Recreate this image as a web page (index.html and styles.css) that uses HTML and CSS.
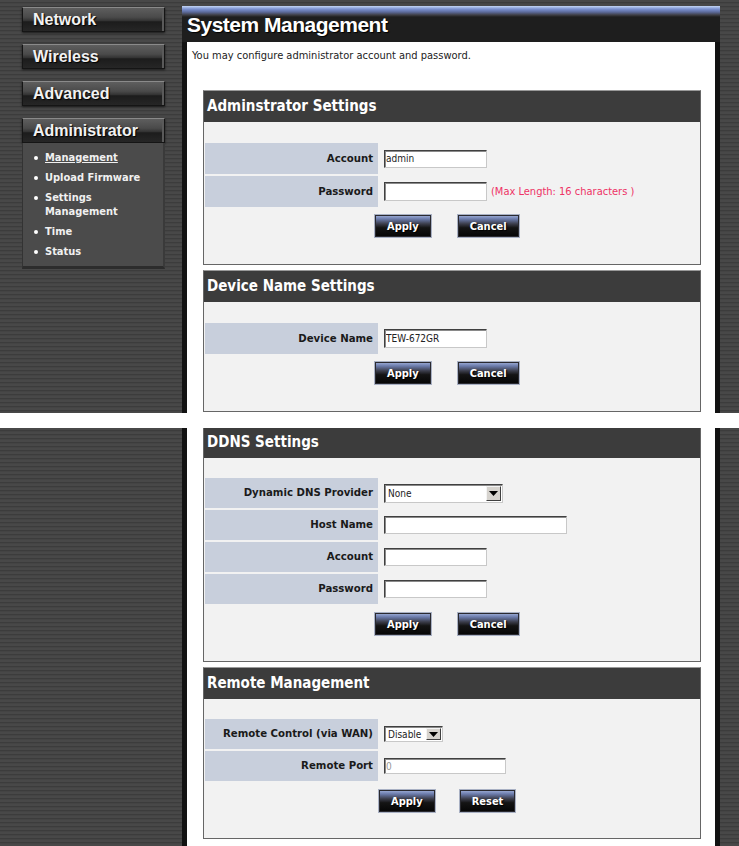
FILE: index.html
```html
<html lang="en">
<head>
  <meta charset="UTF-8">
  <meta name="viewport" content="width=device-width, initial-scale=1.0">
  <title>System Management</title>
  <link rel="stylesheet" href="styles.css">
</head>
<body>
  <!-- upper part of the page -->
  <div class="shot shot-top">
    <aside class="side">
      <nav class="menu">
        <a class="nav-btn">Network</a>
        <a class="nav-btn">Wireless</a>
        <a class="nav-btn">Advanced</a>
        <a class="nav-btn">Administrator</a>
        <ul class="sub">
          <li><a class="current">Management</a></li>
          <li><a>Upload Firmware</a></li>
          <li><a>Settings<br>Management</a></li>
          <li><a>Time</a></li>
          <li><a>Status</a></li>
        </ul>
      </nav>
    </aside>

    <div class="frame">
      <div class="title-bar"><h1>System Management</h1></div>
      <div class="content">
        <p class="intro">You may configure administrator account and password.</p>
        <div class="boxes">

          <section class="box">
            <h2 class="box-head">Adminstrator Settings</h2>
            <div class="box-body">
              <div class="rows">
                <div class="label">Account</div>
                <div class="value"><input class="txt" type="text" value="admin"></div>
                <div class="label">Password</div>
                <div class="value"><input class="txt tall" type="password"><span class="note">(Max Length: 16 characters )</span></div>
              </div>
              <div class="btn-row">
                <button class="btn">Apply</button>
                <button class="btn">Cancel</button>
              </div>
            </div>
          </section>

          <section class="box">
            <h2 class="box-head">Device Name Settings</h2>
            <div class="box-body">
              <div class="rows">
                <div class="label">Device Name</div>
                <div class="value"><input class="txt tall" type="text" value="TEW-672GR"></div>
              </div>
              <div class="btn-row">
                <button class="btn">Apply</button>
                <button class="btn">Cancel</button>
              </div>
            </div>
          </section>

        </div>
      </div>
    </div>
  </div>

  <!-- lower part of the page -->
  <div class="shot shot-bottom">
    <aside class="side"></aside>
    <div class="frame">
      <div class="content">
        <div class="boxes">

          <section class="box cut">
            <h2 class="box-head">DDNS Settings</h2>
            <div class="box-body">
              <div class="rows">
                <div class="label">Dynamic DNS Provider</div>
                <div class="value">
                  <div class="select wide"><span class="sel-text">None</span><span class="sel-arrow"><svg width="9" height="5" viewBox="0 0 9 5"><path d="M0 0h9L4.5 5z" fill="#000"/></svg></span></div>
                </div>
                <div class="label">Host Name</div>
                <div class="value"><input class="txt long" type="text"></div>
                <div class="label">Account</div>
                <div class="value"><input class="txt" type="text"></div>
                <div class="label">Password</div>
                <div class="value"><input class="txt" type="password"></div>
              </div>
              <div class="btn-row">
                <button class="btn">Apply</button>
                <button class="btn">Cancel</button>
              </div>
            </div>
          </section>

          <section class="box">
            <h2 class="box-head">Remote Management</h2>
            <div class="box-body">
              <div class="rows">
                <div class="label">Remote Control (via WAN)</div>
                <div class="value">
                  <div class="select small"><span class="sel-text">Disable</span><span class="sel-arrow"><svg width="9" height="5" viewBox="0 0 9 5"><path d="M0 0h9L4.5 5z" fill="#000"/></svg></span></div>
                </div>
                <div class="label">Remote Port</div>
                <div class="value"><input class="txt port" type="text" value="0"></div>
              </div>
              <div class="btn-row alt">
                <button class="btn">Apply</button>
                <button class="btn">Reset</button>
              </div>
            </div>
          </section>

        </div>
      </div>
    </div>
  </div>
</body>
</html>
```

FILE: styles.css
```css
/* General Styling */
body {
  margin: 0;
  background: #fff;
  font-family: "DejaVu Sans Condensed", "DejaVu Sans", sans-serif;
  font-size: 11px;
  color: #1a1a1a;
}

.shot {
  --row: 30px;
  --pad: 20px;
  --pad-end: 25px;
  --btn-gap: 8px;
  display: flex;
  overflow: hidden;
  background: repeating-linear-gradient(#484848 0 2px, #3c3c3c 2px 3px, #444 3px 4px);
}

.shot-top {
  --row: 31px;
  --pad: 21px;
  --pad-end: 26px;
  --btn-gap: 7px;
  height: 413px;
}

.shot-bottom {
  height: 418px;
  margin-top: 15px;
}

/* Sidebar */
.side {
  width: 182px;
  flex: none;
}

.menu {
  width: 143px;
  margin: 7px 0 0 22px;
}

.nav-btn {
  display: block;
  box-sizing: border-box;
  height: 25px;
  margin-bottom: 12px;
  padding-left: 10px;
  border: 1px solid #151515;
  border-top-color: #8a8a8a;
  background: linear-gradient(#5e5e5e 0, #4a4a4a 40%, #333 55%, #1c1c1c 60%, #262626 100%);
  box-shadow: inset -2px 0 #5a5a5a, 0 1px 2px #1a1a1a;
  font-family: "Liberation Sans", Arial, sans-serif;
  font-weight: bold;
  font-size: 16px;
  line-height: 23px;
  color: #f2f2f2;
  text-shadow: 1px 1px 1px #000;
}

.sub {
  list-style: none;
  margin: -12px 0 0;
  padding: 8px 0 7px;
  background: #4b4b4b;
  border-left: 1px solid #333;
  border-right: 2px solid #3a3a3a;
  border-bottom: 3px solid #2c2c2c;
  box-sizing: border-box;
}

.sub li {
  position: relative;
  padding-left: 22px;
  margin-bottom: 6px;
  line-height: 14px;
  font-weight: bold;
  color: #f0f0f0;
}

.sub li:last-child {
  margin-bottom: 0;
}

.sub li::before {
  content: "";
  position: absolute;
  left: 11px;
  top: 5px;
  width: 4px;
  height: 4px;
  border-radius: 50%;
  background: #fff;
}

.sub a.current {
  text-decoration: underline;
}

/* Main frame */
.frame {
  width: 538px;
  flex: none;
  display: flex;
  flex-direction: column;
  background: #121212;
}

.shot-top .frame {
  margin-top: 6px;
}

.title-bar {
  height: 36px;
  flex: none;
  background: linear-gradient(#c4d6f4 0, #7d93d2 3px, #5d6b9c 6px, #3e3e44 9px, #1e1e1e 11px, #1e1e1e 100%);
}

.title-bar h1 {
  margin: 0;
  padding: 7px 0 0 5px;
  font-family: "Liberation Sans", Arial, sans-serif;
  font-size: 21px;
  letter-spacing: -0.5px;
  line-height: 24px;
  color: #fff;
  text-shadow: 1px 1px 1px #000;
}

.content {
  flex: 1;
  margin: 0 5px;
  background: #fff;
}

.intro {
  margin: 7px 0 0 5px;
  font-size: 11px;
  line-height: 13px;
  color: #222;
}

.boxes {
  padding: 0 14px 0 16px;
}

.shot-top .boxes {
  padding-top: 28px;
}

/* Setting boxes */
.box {
  border: 1px solid #666;
  border-top-color: #999;
  background: #f2f2f2;
  margin-bottom: 5px;
}

.box.cut {
  margin-top: -2px;
}

.box-head {
  margin: 0;
  height: 31px;
  padding-left: 3px;
  background: #3c3c3c;
  font-size: 15px;
  line-height: 31px;
  color: #fff;
}

.box-body {
  padding: var(--pad) 0 var(--pad-end) 1px;
}

.rows {
  display: grid;
  grid-template-columns: 173px auto;
  grid-auto-rows: var(--row);
  column-gap: 6px;
  row-gap: 2px;
}

.label {
  background: #c8cfdc;
  text-align: right;
  padding-right: 5px;
  font-weight: bold;
  font-size: 11.3px;
  line-height: var(--row);
  color: #1a1a1a;
}

.value {
  display: flex;
  align-items: center;
  gap: 4px;
}

.txt {
  box-sizing: border-box;
  width: 103px;
  height: 18px;
  margin: 0;
  padding: 0 1px;
  border: 1px solid;
  border-color: #404040 #c8c8c8 #c8c8c8 #404040;
  box-shadow: inset 1px 1px #8a8a8a;
  background: #fff;
  font-family: "DejaVu Sans Condensed", "DejaVu Sans", sans-serif;
  font-size: 10px;
  color: #222;
}

.txt.tall {
  height: 19px;
}

.txt.long {
  width: 183px;
}

.txt.port {
  width: 122px;
  height: 16px;
  color: #999;
}

.note {
  color: #ee3366;
  font-size: 11px;
}

.select {
  box-sizing: border-box;
  display: flex;
  align-items: center;
  border: 1px solid;
  border-color: #404040 #c8c8c8 #c8c8c8 #404040;
  box-shadow: inset 1px 1px #8a8a8a;
  background: #fff;
  font-size: 10px;
  color: #222;
}

.select.wide {
  width: 119px;
  height: 19px;
}

.select.small {
  width: 59px;
  height: 16px;
}

.sel-text {
  flex: 1;
  padding-left: 3px;
}

.sel-arrow {
  box-sizing: border-box;
  width: 15px;
  height: calc(100% - 2px);
  margin-right: 1px;
  display: flex;
  align-items: center;
  justify-content: center;
  background: #d6d3ce;
  border: 1px solid;
  border-color: #f4f4f4 #404040 #404040 #f4f4f4;
}

/* Buttons */
.btn-row {
  display: flex;
  gap: 25px;
  margin-top: var(--btn-gap);
  padding-left: 169px;
}

.btn-row.alt {
  gap: 23px;
  padding-left: 173px;
}

.btn {
  height: 24px;
  padding: 0 12px;
  border: 1px solid #a9b1c4;
  background: linear-gradient(#a3b3dc 0, #6c7cac 18%, #3c3e4c 40%, #141414 58%, #050505 100%);
  box-shadow: inset 0 0 0 1px #2a2a30;
  font-family: "DejaVu Sans Condensed", "DejaVu Sans", sans-serif;
  font-weight: bold;
  font-size: 11px;
  color: #fff;
  text-shadow: 1px 1px 1px #000;
  cursor: pointer;
}
```
